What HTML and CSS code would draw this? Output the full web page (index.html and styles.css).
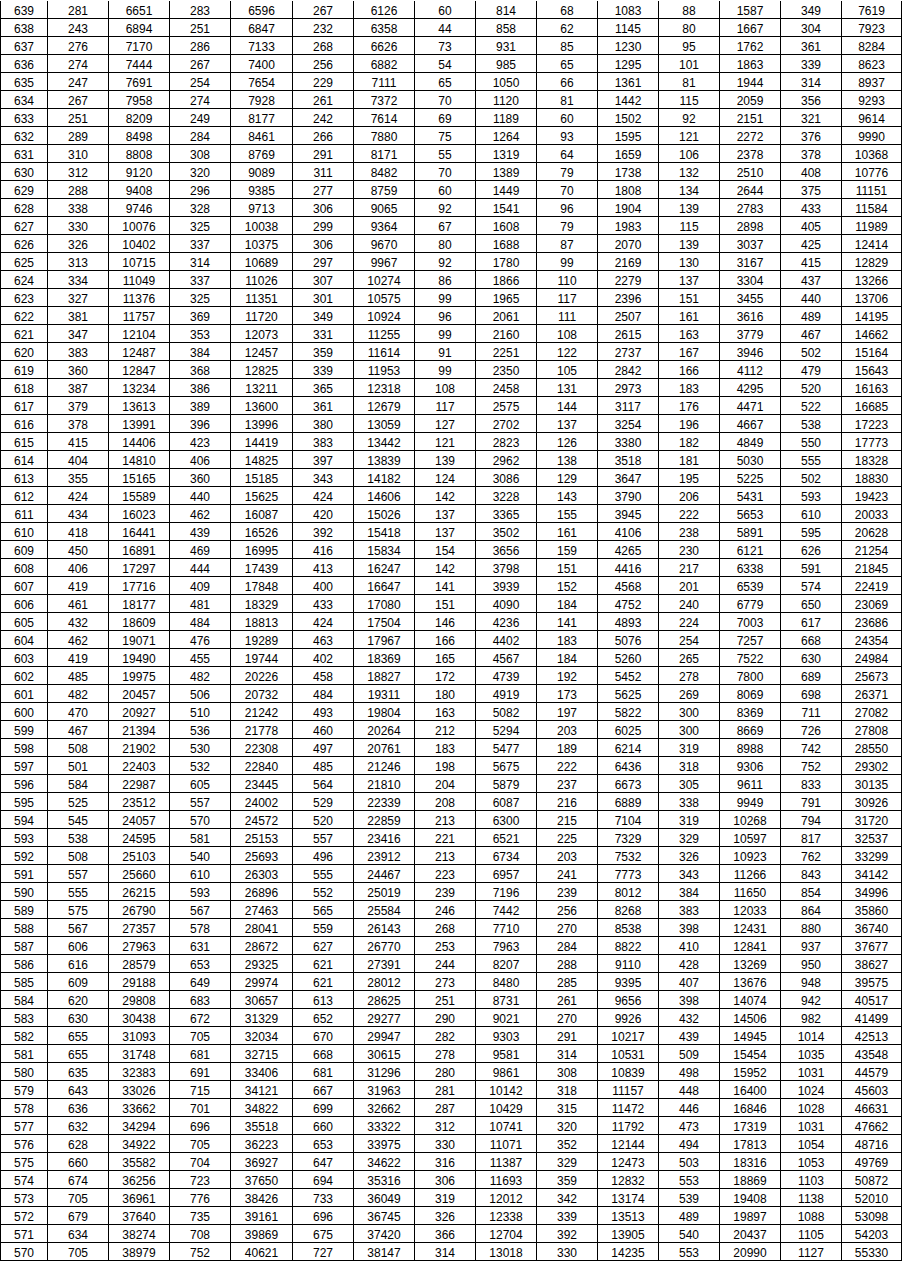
FILE: index.html
```
<!DOCTYPE html>
<html lang="zh-CN">
<head>
<meta charset="utf-8">
<title>分数段统计表</title>
<link rel="stylesheet" href="styles.css">
</head>
<body>
<table class="score-table">
<colgroup>
<col class="c-score"><col class="c-n"><col class="c-n"><col class="c-n"><col class="c-w"><col class="c-n"><col class="c-n"><col class="c-n"><col class="c-n"><col class="c-n"><col class="c-n"><col class="c-n"><col class="c-n"><col class="c-n"><col class="c-last">
</colgroup>
<tbody>
<tr><td>639<td>281<td>6651<td>283<td>6596<td>267<td>6126<td>60<td>814<td>68<td>1083<td>88<td>1587<td>349<td>7619
<tr><td>638<td>243<td>6894<td>251<td>6847<td>232<td>6358<td>44<td>858<td>62<td>1145<td>80<td>1667<td>304<td>7923
<tr><td>637<td>276<td>7170<td>286<td>7133<td>268<td>6626<td>73<td>931<td>85<td>1230<td>95<td>1762<td>361<td>8284
<tr><td>636<td>274<td>7444<td>267<td>7400<td>256<td>6882<td>54<td>985<td>65<td>1295<td>101<td>1863<td>339<td>8623
<tr><td>635<td>247<td>7691<td>254<td>7654<td>229<td>7111<td>65<td>1050<td>66<td>1361<td>81<td>1944<td>314<td>8937
<tr><td>634<td>267<td>7958<td>274<td>7928<td>261<td>7372<td>70<td>1120<td>81<td>1442<td>115<td>2059<td>356<td>9293
<tr><td>633<td>251<td>8209<td>249<td>8177<td>242<td>7614<td>69<td>1189<td>60<td>1502<td>92<td>2151<td>321<td>9614
<tr><td>632<td>289<td>8498<td>284<td>8461<td>266<td>7880<td>75<td>1264<td>93<td>1595<td>121<td>2272<td>376<td>9990
<tr><td>631<td>310<td>8808<td>308<td>8769<td>291<td>8171<td>55<td>1319<td>64<td>1659<td>106<td>2378<td>378<td>10368
<tr><td>630<td>312<td>9120<td>320<td>9089<td>311<td>8482<td>70<td>1389<td>79<td>1738<td>132<td>2510<td>408<td>10776
<tr><td>629<td>288<td>9408<td>296<td>9385<td>277<td>8759<td>60<td>1449<td>70<td>1808<td>134<td>2644<td>375<td>11151
<tr><td>628<td>338<td>9746<td>328<td>9713<td>306<td>9065<td>92<td>1541<td>96<td>1904<td>139<td>2783<td>433<td>11584
<tr><td>627<td>330<td>10076<td>325<td>10038<td>299<td>9364<td>67<td>1608<td>79<td>1983<td>115<td>2898<td>405<td>11989
<tr><td>626<td>326<td>10402<td>337<td>10375<td>306<td>9670<td>80<td>1688<td>87<td>2070<td>139<td>3037<td>425<td>12414
<tr><td>625<td>313<td>10715<td>314<td>10689<td>297<td>9967<td>92<td>1780<td>99<td>2169<td>130<td>3167<td>415<td>12829
<tr><td>624<td>334<td>11049<td>337<td>11026<td>307<td>10274<td>86<td>1866<td>110<td>2279<td>137<td>3304<td>437<td>13266
<tr><td>623<td>327<td>11376<td>325<td>11351<td>301<td>10575<td>99<td>1965<td>117<td>2396<td>151<td>3455<td>440<td>13706
<tr><td>622<td>381<td>11757<td>369<td>11720<td>349<td>10924<td>96<td>2061<td>111<td>2507<td>161<td>3616<td>489<td>14195
<tr><td>621<td>347<td>12104<td>353<td>12073<td>331<td>11255<td>99<td>2160<td>108<td>2615<td>163<td>3779<td>467<td>14662
<tr><td>620<td>383<td>12487<td>384<td>12457<td>359<td>11614<td>91<td>2251<td>122<td>2737<td>167<td>3946<td>502<td>15164
<tr><td>619<td>360<td>12847<td>368<td>12825<td>339<td>11953<td>99<td>2350<td>105<td>2842<td>166<td>4112<td>479<td>15643
<tr><td>618<td>387<td>13234<td>386<td>13211<td>365<td>12318<td>108<td>2458<td>131<td>2973<td>183<td>4295<td>520<td>16163
<tr><td>617<td>379<td>13613<td>389<td>13600<td>361<td>12679<td>117<td>2575<td>144<td>3117<td>176<td>4471<td>522<td>16685
<tr><td>616<td>378<td>13991<td>396<td>13996<td>380<td>13059<td>127<td>2702<td>137<td>3254<td>196<td>4667<td>538<td>17223
<tr><td>615<td>415<td>14406<td>423<td>14419<td>383<td>13442<td>121<td>2823<td>126<td>3380<td>182<td>4849<td>550<td>17773
<tr><td>614<td>404<td>14810<td>406<td>14825<td>397<td>13839<td>139<td>2962<td>138<td>3518<td>181<td>5030<td>555<td>18328
<tr><td>613<td>355<td>15165<td>360<td>15185<td>343<td>14182<td>124<td>3086<td>129<td>3647<td>195<td>5225<td>502<td>18830
<tr><td>612<td>424<td>15589<td>440<td>15625<td>424<td>14606<td>142<td>3228<td>143<td>3790<td>206<td>5431<td>593<td>19423
<tr><td>611<td>434<td>16023<td>462<td>16087<td>420<td>15026<td>137<td>3365<td>155<td>3945<td>222<td>5653<td>610<td>20033
<tr><td>610<td>418<td>16441<td>439<td>16526<td>392<td>15418<td>137<td>3502<td>161<td>4106<td>238<td>5891<td>595<td>20628
<tr><td>609<td>450<td>16891<td>469<td>16995<td>416<td>15834<td>154<td>3656<td>159<td>4265<td>230<td>6121<td>626<td>21254
<tr><td>608<td>406<td>17297<td>444<td>17439<td>413<td>16247<td>142<td>3798<td>151<td>4416<td>217<td>6338<td>591<td>21845
<tr><td>607<td>419<td>17716<td>409<td>17848<td>400<td>16647<td>141<td>3939<td>152<td>4568<td>201<td>6539<td>574<td>22419
<tr><td>606<td>461<td>18177<td>481<td>18329<td>433<td>17080<td>151<td>4090<td>184<td>4752<td>240<td>6779<td>650<td>23069
<tr><td>605<td>432<td>18609<td>484<td>18813<td>424<td>17504<td>146<td>4236<td>141<td>4893<td>224<td>7003<td>617<td>23686
<tr><td>604<td>462<td>19071<td>476<td>19289<td>463<td>17967<td>166<td>4402<td>183<td>5076<td>254<td>7257<td>668<td>24354
<tr><td>603<td>419<td>19490<td>455<td>19744<td>402<td>18369<td>165<td>4567<td>184<td>5260<td>265<td>7522<td>630<td>24984
<tr><td>602<td>485<td>19975<td>482<td>20226<td>458<td>18827<td>172<td>4739<td>192<td>5452<td>278<td>7800<td>689<td>25673
<tr><td>601<td>482<td>20457<td>506<td>20732<td>484<td>19311<td>180<td>4919<td>173<td>5625<td>269<td>8069<td>698<td>26371
<tr><td>600<td>470<td>20927<td>510<td>21242<td>493<td>19804<td>163<td>5082<td>197<td>5822<td>300<td>8369<td>711<td>27082
<tr><td>599<td>467<td>21394<td>536<td>21778<td>460<td>20264<td>212<td>5294<td>203<td>6025<td>300<td>8669<td>726<td>27808
<tr><td>598<td>508<td>21902<td>530<td>22308<td>497<td>20761<td>183<td>5477<td>189<td>6214<td>319<td>8988<td>742<td>28550
<tr><td>597<td>501<td>22403<td>532<td>22840<td>485<td>21246<td>198<td>5675<td>222<td>6436<td>318<td>9306<td>752<td>29302
<tr><td>596<td>584<td>22987<td>605<td>23445<td>564<td>21810<td>204<td>5879<td>237<td>6673<td>305<td>9611<td>833<td>30135
<tr><td>595<td>525<td>23512<td>557<td>24002<td>529<td>22339<td>208<td>6087<td>216<td>6889<td>338<td>9949<td>791<td>30926
<tr><td>594<td>545<td>24057<td>570<td>24572<td>520<td>22859<td>213<td>6300<td>215<td>7104<td>319<td>10268<td>794<td>31720
<tr><td>593<td>538<td>24595<td>581<td>25153<td>557<td>23416<td>221<td>6521<td>225<td>7329<td>329<td>10597<td>817<td>32537
<tr><td>592<td>508<td>25103<td>540<td>25693<td>496<td>23912<td>213<td>6734<td>203<td>7532<td>326<td>10923<td>762<td>33299
<tr><td>591<td>557<td>25660<td>610<td>26303<td>555<td>24467<td>223<td>6957<td>241<td>7773<td>343<td>11266<td>843<td>34142
<tr><td>590<td>555<td>26215<td>593<td>26896<td>552<td>25019<td>239<td>7196<td>239<td>8012<td>384<td>11650<td>854<td>34996
<tr><td>589<td>575<td>26790<td>567<td>27463<td>565<td>25584<td>246<td>7442<td>256<td>8268<td>383<td>12033<td>864<td>35860
<tr><td>588<td>567<td>27357<td>578<td>28041<td>559<td>26143<td>268<td>7710<td>270<td>8538<td>398<td>12431<td>880<td>36740
<tr><td>587<td>606<td>27963<td>631<td>28672<td>627<td>26770<td>253<td>7963<td>284<td>8822<td>410<td>12841<td>937<td>37677
<tr><td>586<td>616<td>28579<td>653<td>29325<td>621<td>27391<td>244<td>8207<td>288<td>9110<td>428<td>13269<td>950<td>38627
<tr><td>585<td>609<td>29188<td>649<td>29974<td>621<td>28012<td>273<td>8480<td>285<td>9395<td>407<td>13676<td>948<td>39575
<tr><td>584<td>620<td>29808<td>683<td>30657<td>613<td>28625<td>251<td>8731<td>261<td>9656<td>398<td>14074<td>942<td>40517
<tr><td>583<td>630<td>30438<td>672<td>31329<td>652<td>29277<td>290<td>9021<td>270<td>9926<td>432<td>14506<td>982<td>41499
<tr><td>582<td>655<td>31093<td>705<td>32034<td>670<td>29947<td>282<td>9303<td>291<td>10217<td>439<td>14945<td>1014<td>42513
<tr><td>581<td>655<td>31748<td>681<td>32715<td>668<td>30615<td>278<td>9581<td>314<td>10531<td>509<td>15454<td>1035<td>43548
<tr><td>580<td>635<td>32383<td>691<td>33406<td>681<td>31296<td>280<td>9861<td>308<td>10839<td>498<td>15952<td>1031<td>44579
<tr><td>579<td>643<td>33026<td>715<td>34121<td>667<td>31963<td>281<td>10142<td>318<td>11157<td>448<td>16400<td>1024<td>45603
<tr><td>578<td>636<td>33662<td>701<td>34822<td>699<td>32662<td>287<td>10429<td>315<td>11472<td>446<td>16846<td>1028<td>46631
<tr><td>577<td>632<td>34294<td>696<td>35518<td>660<td>33322<td>312<td>10741<td>320<td>11792<td>473<td>17319<td>1031<td>47662
<tr><td>576<td>628<td>34922<td>705<td>36223<td>653<td>33975<td>330<td>11071<td>352<td>12144<td>494<td>17813<td>1054<td>48716
<tr><td>575<td>660<td>35582<td>704<td>36927<td>647<td>34622<td>316<td>11387<td>329<td>12473<td>503<td>18316<td>1053<td>49769
<tr><td>574<td>674<td>36256<td>723<td>37650<td>694<td>35316<td>306<td>11693<td>359<td>12832<td>553<td>18869<td>1103<td>50872
<tr><td>573<td>705<td>36961<td>776<td>38426<td>733<td>36049<td>319<td>12012<td>342<td>13174<td>539<td>19408<td>1138<td>52010
<tr><td>572<td>679<td>37640<td>735<td>39161<td>696<td>36745<td>326<td>12338<td>339<td>13513<td>489<td>19897<td>1088<td>53098
<tr><td>571<td>634<td>38274<td>708<td>39869<td>675<td>37420<td>366<td>12704<td>392<td>13905<td>540<td>20437<td>1105<td>54203
<tr><td>570<td>705<td>38979<td>752<td>40621<td>727<td>38147<td>314<td>13018<td>330<td>14235<td>553<td>20990<td>1127<td>55330
</tbody>
</table>
</body>
</html>
```
FILE: styles.css
```
html, body {
  margin: 0;
  padding: 0;
  background: #ffffff;
}

body {
  padding-top: 1px;
  font-family: "Liberation Sans", Arial, "Noto Sans CJK SC", sans-serif;
  font-size: 12px;
  color: #000000;
}

.score-table {
  table-layout: fixed;
  width: 902px;
  border-collapse: separate;
  border-spacing: 0;
  border-left: 1px solid #000000;
}

.c-score { width: 47px; }
.c-n { width: 61px; }
.c-w { width: 62px; }
.c-last { width: 60px; }

.score-table td {
  box-sizing: border-box;
  padding: 3px 0 0 0;
  line-height: 14px;
  text-align: center;
  vertical-align: top;
  white-space: nowrap;
  overflow: hidden;
  border-right: 1px solid #000000;
  border-bottom: 1px solid #000000;
}
```
